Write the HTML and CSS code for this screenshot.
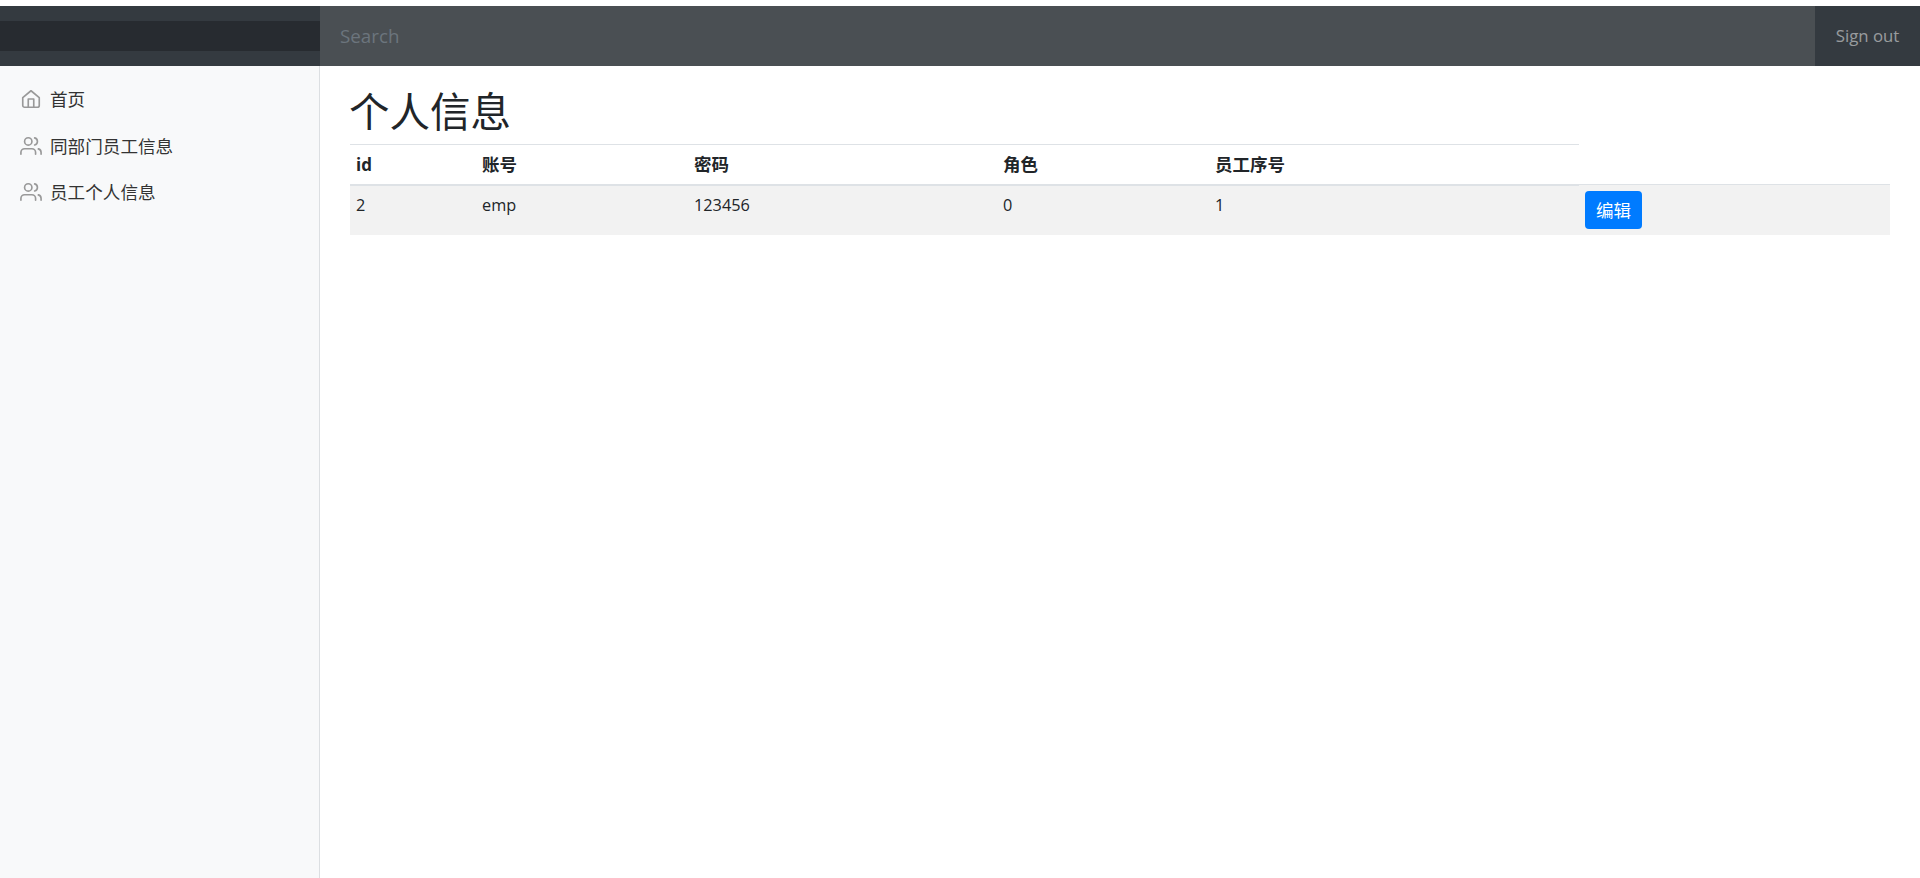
FILE: index.html
```html
<!DOCTYPE html>
<html lang="zh-CN">
<head>
<meta charset="utf-8">
<title>个人信息</title>
<link rel="stylesheet" href="styles.css">
</head>
<body>
<header class="navbar">
  <div class="brand-zone"><div class="brand"></div></div>
  <input class="search" type="text" placeholder="Search" aria-label="Search">
  <a class="signout" href="#">Sign out</a>
</header>
<div class="layout">
  <nav class="sidebar">
    <a class="nav-link" href="#">
      <svg class="icon" viewBox="0 0 24 24"><path d="M3 10.5 12 3l9 7.5V19a2 2 0 0 1-2 2H5a2 2 0 0 1-2-2z"/><path d="M9 21v-9h6v9"/></svg>
      <span>首页</span>
    </a>
    <a class="nav-link" href="#">
      <svg class="icon" viewBox="0 0 24 24"><path d="M17 21v-2a4 4 0 0 0-4-4H5a4 4 0 0 0-4 4v2"/><circle cx="9" cy="7" r="4"/><path d="M23 21v-2a4 4 0 0 0-3-3.87"/><path d="M16 3.13a4 4 0 0 1 0 7.75"/></svg>
      <span>同部门员工信息</span>
    </a>
    <a class="nav-link" href="#">
      <svg class="icon" viewBox="0 0 24 24"><path d="M17 21v-2a4 4 0 0 0-4-4H5a4 4 0 0 0-4 4v2"/><circle cx="9" cy="7" r="4"/><path d="M23 21v-2a4 4 0 0 0-3-3.87"/><path d="M16 3.13a4 4 0 0 1 0 7.75"/></svg>
      <span>员工个人信息</span>
    </a>
  </nav>
  <main class="main">
    <h1 class="title">个人信息</h1>
    <table class="table">
      <colgroup>
        <col class="c1"><col class="c2"><col class="c3"><col class="c4"><col class="c5"><col class="c6">
      </colgroup>
      <thead>
        <tr><th class="latin-head">id</th><th>账号</th><th>密码</th><th>角色</th><th>员工序号</th></tr>
      </thead>
      <tbody>
        <tr>
          <td class="latin">2</td><td class="latin">emp</td><td class="latin">123456</td><td class="latin">0</td><td class="latin">1</td>
          <td><button class="btn" type="button">编辑</button></td>
        </tr>
      </tbody>
    </table>
  </main>
</div>
</body>
</html>
```

FILE: styles.css
```css
* { box-sizing: border-box; }
html, body { height: 100%; }
body {
  margin: 0;
  padding-top: 6px;
  display: flex;
  flex-direction: column;
  background: #fff;
  color: #212529;
  font-family: "Open Sans", "Noto Sans CJK SC", sans-serif;
  font-size: 17.5px;
  line-height: 24px;
  overflow: hidden;
}
.navbar {
  display: flex;
  align-items: stretch;
  height: 60px;
  flex: none;
  background: #343a40;
}
.brand-zone {
  width: 320px;
  flex: none;
  display: flex;
  align-items: center;
}
.brand {
  width: 100%;
  height: 30px;
  background: #272b30;
}
.search {
  flex: 1;
  min-width: 0;
  border: 0;
  outline: 0;
  padding: 0 20px;
  background: #4a4f53;
  color: #fff;
  font: inherit;
  font-size: 18.8px;
}
.search::placeholder { color: #6c757d; opacity: 1; }
.signout {
  width: 105px;
  flex: none;
  display: flex;
  align-items: center;
  justify-content: center;
  color: rgba(255, 255, 255, .5);
  font-size: 16.8px;
  text-decoration: none;
}
.layout {
  flex: 1;
  display: flex;
  min-height: 0;
}
.sidebar {
  width: 320px;
  flex: none;
  background: #f8f9fa;
  border-right: 1px solid #dcdfe2;
  padding-top: 9.75px;
  display: flex;
  flex-direction: column;
}
.nav-link {
  display: flex;
  align-items: center;
  gap: 8px;
  height: 46.5px;
  padding-left: 20px;
  color: #333;
  text-decoration: none;
  font-size: 17.6px;
}
.icon {
  width: 22px;
  height: 22px;
  flex: none;
  fill: none;
  stroke: #999;
  stroke-width: 1.8;
  stroke-linecap: round;
  stroke-linejoin: round;
}
.main {
  flex: 1;
  min-width: 0;
  padding: 0 30px;
}
.title {
  margin: 0 0 0 -1px;
  height: 78px;
  padding-top: 19px;
  font-size: 40.5px;
  line-height: 54px;
  font-weight: 400;
}
.table {
  width: 1540px;
  table-layout: fixed;
  border-collapse: collapse;
}
.c1 { width: 126px; }
.c2 { width: 212px; }
.c3 { width: 309px; }
.c4 { width: 212px; }
.c5 { width: 370px; }
.table th, .table td {
  padding: 6px;
  vertical-align: top;
  text-align: left;
  border-top: 1px solid #dee2e6;
}
.table th {
  height: 40px;
  padding: 7px 6px 5px;
  font-weight: 700;
  border-bottom: 2px solid #dee2e6;
}
.table td { background: #f2f2f2; height: 50px; }
.table .latin { font-size: 16.3px; padding-top: 7px; padding-bottom: 5px; }
.table .latin-head { font-size: 17px; padding-top: 8px; padding-bottom: 4px; }
.btn {
  display: block;
  width: 57px;
  height: 38px;
  padding: 0;
  border: 0;
  border-radius: 4px;
  background: #007bff;
  color: #fff;
  font: inherit;
}
```
